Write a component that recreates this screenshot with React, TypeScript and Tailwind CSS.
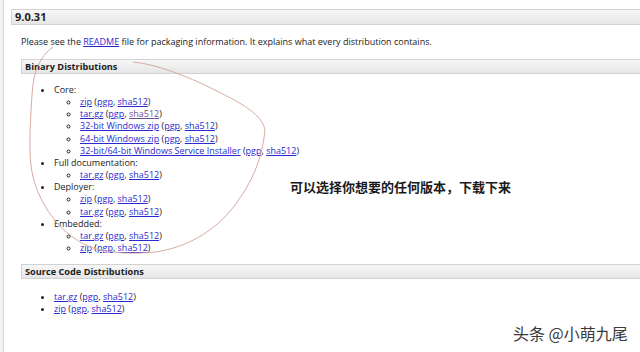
import React from 'react';

type Item = { name: string; visited?: boolean };

const core: Item[] = [
  { name: 'zip' },
  { name: 'tar.gz', visited: true },
  { name: '32-bit Windows zip' },
  { name: '64-bit Windows zip' },
  { name: '32-bit/64-bit Windows Service Installer' },
];

const groups: { label: string; items: Item[] }[] = [
  { label: 'Core:', items: core },
  { label: 'Full documentation:', items: [{ name: 'tar.gz' }] },
  { label: 'Deployer:', items: [{ name: 'zip' }, { name: 'tar.gz' }] },
  { label: 'Embedded:', items: [{ name: 'tar.gz' }, { name: 'zip' }] },
];

function Link({ children, visited }: { children: React.ReactNode; visited?: boolean }) {
  return (
    <a className={visited ? 'text-[#6b4f96] underline' : 'text-[#2a2ad0] underline'}>{children}</a>
  );
}

function Download({ item }: { item: Item }) {
  return (
    <span>
      <Link>{item.name}</Link> (<Link>pgp</Link>, <Link visited={item.visited}>sha512</Link>)
    </span>
  );
}

function Bar({ children, className }: { children: React.ReactNode; className?: string }) {
  return (
    <div
      className={
        'border-y border-l border-[#d2d2d2] bg-gradient-to-b from-[#f7f7f7] to-[#e6e6e6] font-bold text-[#222] flex items-center ' +
        (className ?? '')
      }
    >
      {children}
    </div>
  );
}

export default function App() {
  return (
    <div
      className="relative w-[640px] h-[352px] overflow-hidden bg-white flex text-[#222]"
      style={{ fontFamily: '"Open Sans", "Noto Sans", sans-serif' }}
    >
      <div className="w-[4px] shrink-0 border-r border-[#d8d6d0] bg-[#f3f2ee]" />

      <div className="flex-1 pl-[7px] pt-[9px]">
        <Bar className="h-[16px] pl-[3px] text-[11px]">9.0.31</Bar>

        <div className="pl-[10px]">
          <p className="mt-[11px] text-[9px] leading-[12px]">
            Please see the <Link>README</Link> file for packaging information. It explains what every distribution contains.
          </p>

          <Bar className="mt-[11px] h-[15px] pl-[3px] text-[9.2px]">Binary Distributions</Bar>

          <ul className="mt-[10px] pl-[33px] text-[9px] leading-[12.15px] list-disc">
            {groups.map((g) => (
              <li key={g.label}>
                {g.label}
                <ul className="pl-[26px] list-[circle]">
                  {g.items.map((it, i) => (
                    <li key={i}>
                      <Download item={it} />
                    </li>
                  ))}
                </ul>
              </li>
            ))}
          </ul>

          <Bar className="mt-[10px] h-[15px] pl-[3px] text-[9.2px]">Source Code Distributions</Bar>

          <ul className="mt-[12px] pl-[33px] text-[9px] leading-[12.15px] list-disc">
            <li>
              <Download item={{ name: 'tar.gz' }} />
            </li>
            <li>
              <Download item={{ name: 'zip' }} />
            </li>
          </ul>
        </div>
      </div>

      {/* hand-drawn annotation */}
      <svg className="absolute left-0 top-0 pointer-events-none" width="640" height="352" viewBox="0 0 640 352">
        <path
          d="M53 47 C40 56 33 72 32 95 C30 125 29 150 31 165 C34 195 55 232 90 247 C110 254 135 254 155 252 C185 248 215 232 235 205 C252 182 262 160 265 130 C262 115 245 105 215 90 C185 75 155 64 133 62"
          fill="none"
          stroke="#d8aaa4"
          strokeWidth="1"
        />
      </svg>

      <div
        className="absolute left-[290px] top-[177px] text-[13px] font-bold text-[#1a1a1a]"
        style={{ fontFamily: '"Noto Sans CJK SC", sans-serif' }}
      >
        可以选择你想要的任何版本，下载下来
      </div>

      <div
        className="absolute left-[513px] top-[321px] text-[16px] text-[#3a3a3a]"
        style={{ fontFamily: '"Noto Sans CJK SC", sans-serif', textShadow: '0 0 2px #fff, 0 0 2px #fff' }}
      >
        头条 @小萌九尾
      </div>
    </div>
  );
}
